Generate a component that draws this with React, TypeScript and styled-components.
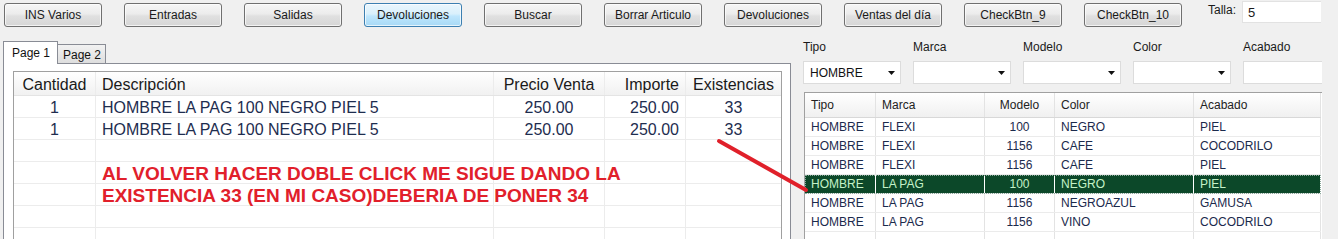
import styled, { createGlobalStyle } from 'styled-components'

const GlobalStyle = createGlobalStyle`
  html, body {
    margin: 0;
    padding: 0;
    background: #f0f0f0;
  }
  body {
    font-family: "Liberation Sans", Arial, sans-serif;
  }
`

const Screen = styled.div`
  position: relative;
  width: 1338px;
  height: 239px;
  overflow: hidden;
  background: #f0f0f0;
  font-family: "Liberation Sans", Arial, sans-serif;
  color: #1a1a1a;
`

const Toolbar = styled.div`
  display: flex;
  align-items: flex-start;
  gap: 22px;
  height: 30px;
  padding: 3px 0 0 4px;
  box-sizing: border-box;
`

const Button = styled.button<{ $active?: boolean }>`
  width: 98px;
  height: 24px;
  box-sizing: border-box;
  flex: none;
  padding: 0;
  border: 1px solid ${(p) => (p.$active ? '#3c7fb1' : '#707070')};
  border-radius: 3px;
  background: ${(p) =>
    p.$active
      ? 'linear-gradient(#eaf6fd 0%, #d9f0fc 45%, #bee6fd 55%, #a7d9f5 100%)'
      : 'linear-gradient(#f6f6f6 0%, #ececec 45%, #e0e0e0 55%, #d6d6d6 100%)'};
  box-shadow: inset 0 0 0 1px rgba(255, 255, 255, 0.7);
  font: 12px "Liberation Sans", Arial, sans-serif;
  color: #1a1a1a;
`

const TallaGroup = styled.div`
  display: flex;
  align-items: flex-start;
  gap: 6px;
  margin-left: 4px;
  margin-top: -2px;
`

const TallaLabel = styled.span`
  font-size: 12px;
  line-height: 14px;
  padding-top: 2px;
`

const TallaInput = styled.div`
  width: 79px;
  height: 22px;
  box-sizing: border-box;
  background: #fff;
  border: 1px solid #e2e2e2;
  border-right: none;
  padding: 4px 0 0 5px;
  font-size: 13px;
  line-height: 14px;
`

const Main = styled.div`
  display: flex;
  align-items: flex-start;
`

const LeftPane = styled.div`
  width: 788px;
  margin: 11px 0 0 3px;
  flex: none;
`

const TabStrip = styled.div`
  display: flex;
  align-items: flex-end;
  height: 22px;
  position: relative;
  z-index: 1;
`

const Tab = styled.div<{ $active?: boolean }>`
  box-sizing: border-box;
  border: 1px solid #898c95;
  border-bottom: none;
  font-size: 12px;
  line-height: 14px;
  color: #111;
  ${(p) =>
    p.$active
      ? `
    width: 55px;
    height: 23px;
    margin-bottom: -1px;
    padding: 4px 0 0 8px;
    background: #fff;
  `
      : `
    width: 49px;
    height: 19px;
    margin-left: -1px;
    padding: 3px 0 0 5px;
    background: linear-gradient(#f2f2f2, #dedede);
  `}
`

const Panel = styled.div`
  box-sizing: border-box;
  height: 200px;
  border: 1px solid #898c95;
  background: #fff;
  padding: 7px 8px 0 9px;
`

const Table = styled.div`
  position: relative;
  width: 769px;
  height: 190px;
  box-sizing: border-box;
  border: 1px solid #a0a0a0;
  border-bottom: none;
  overflow: hidden;
`

const leftCols = '82px 398px 111px 81px 95px'

const TableRow = styled.div<{ $header?: boolean }>`
  display: grid;
  grid-template-columns: ${leftCols};
  height: ${(p) => (p.$header ? 24 : 22)}px;
  box-sizing: border-box;
  border-bottom: 1px solid ${(p) => (p.$header ? '#e4e4e4' : '#ececec')};
  background: ${(p) => (p.$header ? 'linear-gradient(#ffffff, #f1f1f1)' : '#fff')};
  font-size: 16px;
  color: ${(p) => (p.$header ? '#1a1a1a' : '#1e2d4f')};
`

const Cell = styled.div<{ $align?: 'left' | 'center' | 'right' }>`
  display: flex;
  align-items: center;
  justify-content: ${(p) =>
    p.$align === 'left' ? 'flex-start' : p.$align === 'right' ? 'flex-end' : 'center'};
  padding: 2px 6px 0 6px;
  box-sizing: border-box;
  border-right: 1px solid #ececec;
  white-space: nowrap;
  overflow: hidden;
  &:last-child {
    border-right: none;
  }
`

const Note = styled.div`
  position: absolute;
  left: 88px;
  top: 91px;
  font-size: 19px;
  line-height: 22px;
  font-weight: bold;
  color: #e1202b;
  white-space: nowrap;
`

const RightPane = styled.div`
  width: 531px;
  flex: none;
  padding: 10px 0 0 12px;
  box-sizing: border-box;
  overflow: hidden;
`

const FilterRow = styled.div`
  display: flex;
  gap: 12px;
`

const FilterGroup = styled.div`
  width: 98px;
  flex: none;
`

const FilterLabel = styled.div`
  font-size: 12px;
  line-height: 15px;
  margin-bottom: 6px;
  color: #1a1a1a;
`

const Combo = styled.div`
  height: 23px;
  box-sizing: border-box;
  background: #fff;
  border: 1px solid #dcdcdc;
  display: flex;
  align-items: center;
  justify-content: space-between;
  padding: 0 5px 0 6px;
  font-size: 12px;
  color: #111;
`

const Grid = styled.div`
  margin: 8px 0 0 1px;
  height: 160px;
  box-sizing: border-box;
  border: 1px solid #a0a0a0;
  border-right: none;
  border-bottom: none;
  background: #fff;
  overflow: hidden;
`

const gridCols = '71px 109px 70px 139px 127px'

const GridRow = styled.div<{ $header?: boolean; $selected?: boolean }>`
  position: relative;
  display: grid;
  grid-template-columns: ${gridCols};
  width: 516px;
  height: ${(p) => (p.$header ? 25 : 19)}px;
  box-sizing: border-box;
  border-bottom: 1px solid ${(p) => (p.$header ? '#d8d8d8' : '#ebebeb')};
  background: ${(p) =>
    p.$header ? 'linear-gradient(#ffffff, #f0f0f0)' : p.$selected ? '#0c4829' : '#fff'};
  color: ${(p) => (p.$header ? '#222' : p.$selected ? '#c4f2c8' : '#1b2a4c')};
  font-size: 12px;
  ${(p) => (p.$selected ? 'outline: 1px dotted #8aa89a; outline-offset: -1px;' : '')}
`

const GridCell = styled.div<{ $center?: boolean; $selected?: boolean }>`
  display: flex;
  align-items: center;
  justify-content: ${(p) => (p.$center ? 'center' : 'flex-start')};
  padding: 0 6px;
  box-sizing: border-box;
  border-right: 1px solid ${(p) => (p.$selected ? '#ffffff' : '#e3e3e3')};
  white-space: nowrap;
  overflow: hidden;
`

const Overlay = styled.svg`
  position: absolute;
  left: 0;
  top: 0;
  pointer-events: none;
`

const ComboArrow = () => (
  <svg width="7" height="4" viewBox="0 0 7 4">
    <path d="M0 0 L7 0 L3.5 4 Z" fill="#111" />
  </svg>
)

const buttons = [
  'INS Varios',
  'Entradas',
  'Salidas',
  'Devoluciones',
  'Buscar',
  'Borrar Articulo',
  'Devoluciones',
  'Ventas del día',
  'CheckBtn_9',
  'CheckBtn_10'
]

const ventaRows = [
  { cantidad: '1', descripcion: 'HOMBRE LA PAG 100 NEGRO PIEL 5', precio: '250.00', importe: '250.00', existencias: '33' },
  { cantidad: '1', descripcion: 'HOMBRE LA PAG 100 NEGRO PIEL 5', precio: '250.00', importe: '250.00', existencias: '33' }
]

const filters = [
  { label: 'Tipo', value: 'HOMBRE' },
  { label: 'Marca', value: '' },
  { label: 'Modelo', value: '' },
  { label: 'Color', value: '' },
  { label: 'Acabado', value: '' }
]

const articulos = [
  ['HOMBRE', 'FLEXI', '100', 'NEGRO', 'PIEL'],
  ['HOMBRE', 'FLEXI', '1156', 'CAFE', 'COCODRILO'],
  ['HOMBRE', 'FLEXI', '1156', 'CAFE', 'PIEL'],
  ['HOMBRE', 'LA PAG', '100', 'NEGRO', 'PIEL'],
  ['HOMBRE', 'LA PAG', '1156', 'NEGROAZUL', 'GAMUSA'],
  ['HOMBRE', 'LA PAG', '1156', 'VINO', 'COCODRILO'],
  ['', '', '', '', '']
]

const App = (): React.ReactElement => {
  return (
    <Screen>
      <GlobalStyle />
      <Toolbar>
        {buttons.map((label, i) => (
          <Button key={i} $active={i === 3}>
            {label}
          </Button>
        ))}
        <TallaGroup>
          <TallaLabel>Talla:</TallaLabel>
          <TallaInput>5</TallaInput>
        </TallaGroup>
      </Toolbar>

      <Main>
        <LeftPane>
          <TabStrip>
            <Tab $active>Page 1</Tab>
            <Tab>Page 2</Tab>
          </TabStrip>
          <Panel>
            <Table>
              <TableRow $header>
                <Cell>Cantidad</Cell>
                <Cell $align="left">Descripción</Cell>
                <Cell>Precio Venta</Cell>
                <Cell $align="right">Importe</Cell>
                <Cell>Existencias</Cell>
              </TableRow>
              {ventaRows.map((row, i) => (
                <TableRow key={i}>
                  <Cell>{row.cantidad}</Cell>
                  <Cell $align="left">{row.descripcion}</Cell>
                  <Cell>{row.precio}</Cell>
                  <Cell $align="right">{row.importe}</Cell>
                  <Cell>{row.existencias}</Cell>
                </TableRow>
              ))}
              {[0, 1, 2, 3, 4].map((i) => (
                <TableRow key={`empty-${i}`}>
                  <Cell />
                  <Cell />
                  <Cell />
                  <Cell />
                  <Cell />
                </TableRow>
              ))}
              <Note>
                AL VOLVER HACER DOBLE CLICK ME SIGUE DANDO LA
                <br />
                EXISTENCIA 33 (EN MI CASO)DEBERIA DE PONER 34
              </Note>
            </Table>
          </Panel>
        </LeftPane>

        <RightPane>
          <FilterRow>
            {filters.map((f) => (
              <FilterGroup key={f.label}>
                <FilterLabel>{f.label}</FilterLabel>
                <Combo>
                  <span>{f.value}</span>
                  <ComboArrow />
                </Combo>
              </FilterGroup>
            ))}
          </FilterRow>
          <Grid>
            <GridRow $header>
              <GridCell>Tipo</GridCell>
              <GridCell>Marca</GridCell>
              <GridCell $center>Modelo</GridCell>
              <GridCell>Color</GridCell>
              <GridCell>Acabado</GridCell>
            </GridRow>
            {articulos.map((row, i) => {
              const selected = i === 3
              return (
                <GridRow key={i} $selected={selected}>
                  <GridCell $selected={selected}>{row[0]}</GridCell>
                  <GridCell $selected={selected}>{row[1]}</GridCell>
                  <GridCell $selected={selected} $center>
                    {row[2]}
                  </GridCell>
                  <GridCell $selected={selected}>{row[3]}</GridCell>
                  <GridCell $selected={selected}>{row[4]}</GridCell>
                </GridRow>
              )
            })}
          </Grid>
        </RightPane>
      </Main>

      <Overlay width="1338" height="239" viewBox="0 0 1338 239">
        <line x1="719" y1="141" x2="806" y2="190" stroke="#e0202a" strokeWidth="4" strokeLinecap="round" />
      </Overlay>
    </Screen>
  )
}

export default App
